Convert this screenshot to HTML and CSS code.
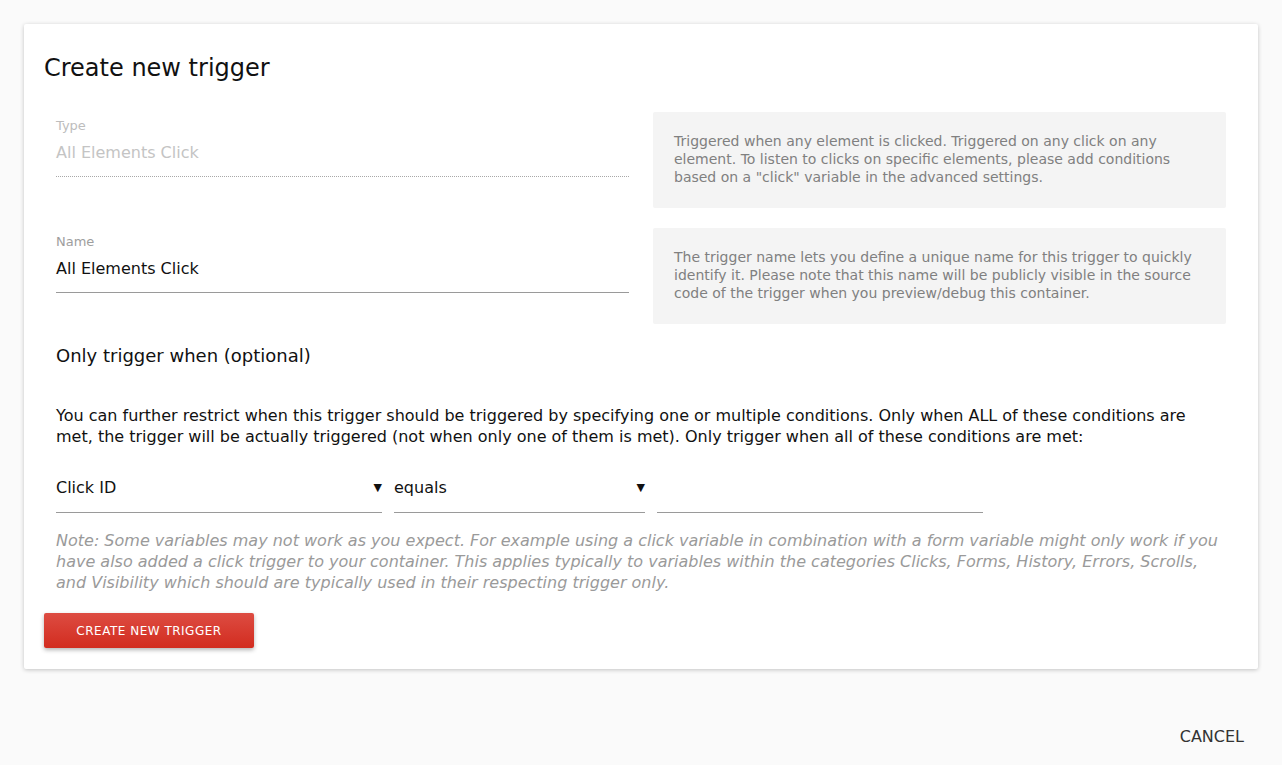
FILE: index.html
```html
<!DOCTYPE html>
<html lang="en">
<head>
<meta charset="utf-8">
<title>Create new trigger</title>
<link rel="stylesheet" href="styles.css">
</head>
<body>
<div class="page">
  <div class="card">
    <h1 class="title">Create new trigger</h1>
    <div class="form">
      <div class="row">
        <div class="field disabled">
          <div class="label">Type</div>
          <div class="value dotted">All Elements Click</div>
        </div>
        <div class="help">Triggered when any element is clicked. Triggered on any click on any element. To listen to clicks on specific elements, please add conditions based on a "click" variable in the advanced settings.</div>
      </div>
      <div class="row">
        <div class="field">
          <div class="label">Name</div>
          <div class="value">All Elements Click</div>
        </div>
        <div class="help">The trigger name lets you define a unique name for this trigger to quickly identify it. Please note that this name will be publicly visible in the source code of the trigger when you preview/debug this container.</div>
      </div>
      <h2 class="subtitle">Only trigger when (optional)</h2>
      <p class="desc">You can further restrict when this trigger should be triggered by specifying one or multiple conditions. Only when ALL of these conditions are met, the trigger will be actually triggered (not when only one of them is met). Only trigger when all of these conditions are met:</p>
      <div class="conditions">
        <div class="select wide"><span>Click ID</span><span class="arrow">▼</span></div>
        <div class="select mid"><span>equals</span><span class="arrow">▼</span></div>
        <div class="select wide text"></div>
      </div>
      <p class="note">Note: Some variables may not work as you expect. For example using a click variable in combination with a form variable might only work if you have also added a click trigger to your container. This applies typically to variables within the categories Clicks, Forms, History, Errors, Scrolls, and Visibility which should are typically used in their respecting trigger only.</p>
    </div>
    <button class="primary">Create new trigger</button>
  </div>
  <div class="actions">
    <button class="flat">Cancel</button>
  </div>
</div>
</body>
</html>
```

FILE: styles.css
```css
*, *::before, *::after {
  box-sizing: border-box;
}

html, body {
  margin: 0;
  padding: 0;
  background: #fafafa;
  font-family: "DejaVu Sans", "Liberation Sans", sans-serif;
  color: #222;
}

.page {
  padding: 24px 24px 0 24px;
}

.card {
  background: #fff;
  border-radius: 2px;
  box-shadow: 0 1px 4px rgba(0, 0, 0, 0.22);
  padding: 30px 20px 21px 20px;
}

.title {
  margin: 0;
  font-size: 24px;
  font-weight: normal;
  line-height: 28px;
  color: #111;
}

.form {
  padding: 30px 12px 0 12px;
}

.row {
  display: grid;
  grid-template-columns: 1fr 1fr;
  column-gap: 24px;
  align-items: start;
  margin-bottom: 20px;
}

.field {
  min-width: 0;
  padding-top: 6px;
}

.label {
  font-size: 13px;
  line-height: 15px;
  color: #9e9e9e;
}

.value {
  font-size: 16px;
  line-height: 19px;
  padding: 10px 0 14px 0;
  border-bottom: 1px solid #9a9a9a;
  color: #111;
}

.disabled .label {
  color: #bdbdbd;
}

.disabled .value {
  color: #c4c4c4;
}

.value.dotted {
  border-bottom: 1px dotted #a8a8a8;
}

.help {
  min-width: 0;
  background: #f4f4f4;
  border-radius: 2px;
  padding: 20px 21px 22px 21px;
  font-size: 14px;
  line-height: 18px;
  color: #808080;
}

.subtitle {
  margin: 0;
  padding-top: 1px;
  font-size: 18px;
  font-weight: normal;
  line-height: 21px;
  color: #111;
}

.desc {
  margin: 39px 0 0 0;
  font-size: 16px;
  line-height: 21px;
  color: #111;
}

.conditions {
  display: flex;
  gap: 12px;
  margin-top: 31px;
}

.select {
  display: flex;
  justify-content: space-between;
  align-items: center;
  font-size: 16px;
  line-height: 19px;
  height: 35px;
  padding: 0 0 15px 0;
  border-bottom: 1px solid #9a9a9a;
  color: #111;
}

.select.wide {
  width: 326px;
}

.select.mid {
  width: 251px;
}

.arrow {
  font-size: 11px;
  line-height: 19px;
  color: #111;
}

.note {
  margin: 17px 0 0 0;
  font-size: 16px;
  line-height: 21px;
  font-style: italic;
  color: #9a9a9a;
}

.primary {
  display: block;
  margin-top: 20px;
  width: 210px;
  height: 35px;
  border: none;
  border-radius: 2px;
  background: linear-gradient(#dd4c42, #d22c1f);
  box-shadow: 0 2px 4px rgba(0, 0, 0, 0.3);
  color: #fff;
  font-family: "DejaVu Sans", "Liberation Sans", sans-serif;
  font-size: 12px;
  letter-spacing: 0.5px;
  text-transform: uppercase;
  padding: 0;
}

.actions {
  display: flex;
  justify-content: flex-end;
  padding: 58px 14px 0 0;
}

.flat {
  border: none;
  background: transparent;
  padding: 0;
  font-family: "DejaVu Sans", "Liberation Sans", sans-serif;
  font-size: 16px;
  line-height: 19px;
  color: #333;
  text-transform: uppercase;
}
```
